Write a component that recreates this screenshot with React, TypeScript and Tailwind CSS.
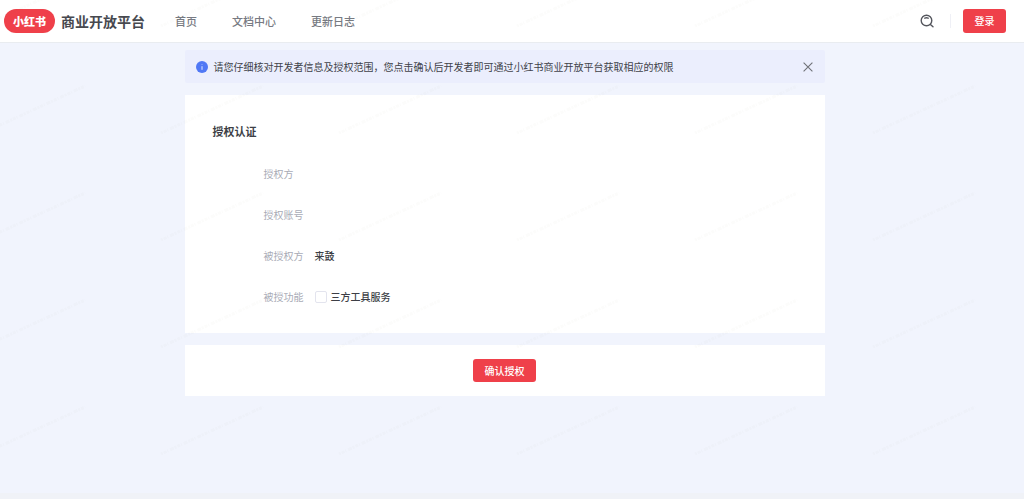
import { useState } from "react";
import type { ReactNode } from "react";

const navItems = [
  { label: "首页", href: "#home" },
  { label: "文档中心", href: "#docs" },
  { label: "更新日志", href: "#changelog" },
];

function SearchIcon() {
  return (
    <svg viewBox="0 0 14 14" className="h-3.5 w-3.5" fill="none" stroke="#55575e" strokeWidth="1.4" strokeLinecap="round" aria-hidden="true">
      <circle cx="6.5" cy="6.5" r="5.3" />
      <path d="M10.4 10.4 13 12.8M4.8 4.2Q6.5 3.3 8.2 4.2" />
    </svg>
  );
}

function InfoIcon() {
  return (
    <svg viewBox="0 0 12 12" className="h-3 w-3 shrink-0" aria-hidden="true">
      <circle cx="6" cy="6" r="6" fill="#5078f5" />
      <path d="M6 5.2v3.6" stroke="#dfe6ff" strokeWidth="1" />
      <circle cx="6" cy="3.5" r="0.5" fill="#a9bcfb" />
    </svg>
  );
}

function CloseIcon() {
  return (
    <svg viewBox="0 0 10 10" className="h-2.5 w-2.5" stroke="#6f7178" strokeWidth="1.1" aria-hidden="true">
      <path d="M.6.6 9.4 9.4M9.4.6.6 9.4" />
    </svg>
  );
}

// Faint diagonal watermark repeated over the whole page
function Watermark() {
  return (
    <svg className="pointer-events-none absolute inset-0 h-full w-full" aria-hidden="true">
      <defs>
        <pattern id="watermark" x="159" y="28" width="178" height="107" patternUnits="userSpaceOnUse">
          <path d="M2 105 104 58" stroke="#7a6a40" strokeOpacity="0.02" strokeWidth="3" strokeDasharray="2 1 3 1 1 2 4 1" />
        </pattern>
      </defs>
      <rect width="100%" height="100%" fill="url(#watermark)" />
    </svg>
  );
}

function Row({ label, children }: { label: string; children?: ReactNode }) {
  return (
    <div className="flex h-[41px] items-center">
      <dt className="w-[51px] text-[#a9abb6]">{label}</dt>
      <dd className="flex items-center font-medium text-[#3d3f46]">{children}</dd>
    </div>
  );
}

export default function App() {
  const [showNotice, setShowNotice] = useState(true);
  const [checked, setChecked] = useState(false);

  return (
    <div className="relative flex min-h-screen flex-col bg-[#f1f4fd] font-['Noto_Sans_CJK_SC',sans-serif] text-[10px] leading-4">
      <header className="flex h-[43px] items-center border-b border-[#e9ecf0] bg-white pr-[18px] pl-1">
        <a href="#home" className="flex items-center gap-1.5">
          <span className="flex h-6 w-[51px] items-center justify-center rounded-full bg-[#ef404a] text-[11px] font-black text-white">小红书</span>
          <span className="text-[14px] font-bold text-[#47494f]">商业开放平台</span>
        </a>
        <nav className="ml-[30px] flex gap-[35px] text-[11px] font-medium text-[#777a82]">
          {navItems.map((item) => (
            <a key={item.href} href={item.href}>{item.label}</a>
          ))}
        </nav>
        <div className="ml-auto flex items-center">
          <button type="button" aria-label="搜索"><SearchIcon /></button>
          <span className="mr-3 ml-4 h-3.5 w-px bg-[#eff0f6]" />
          <button type="button" className="h-6 w-[43px] rounded-[3px] bg-[#ef404a] font-medium text-white">登录</button>
        </div>
      </header>

      <div className="flex grow flex-col pr-[15px]">
        <main className="mx-auto mt-[7px] flex w-full max-w-[640px] flex-col gap-3">
          {showNotice && (
            <div role="status" className="flex h-[33px] items-center gap-1.5 rounded-xs bg-[#ebeefd] pr-3 pl-[11px] text-[#404249]">
              <InfoIcon />
              <p>请您仔细核对开发者信息及授权范围，您点击确认后开发者即可通过小红书商业开放平台获取相应的权限</p>
              <button type="button" aria-label="关闭" className="ml-auto" onClick={() => setShowNotice(false)}><CloseIcon /></button>
            </div>
          )}

          <section className="bg-white px-7 pt-7 pb-4">
            <h1 className="text-[11px] leading-4 font-bold text-[#3d3f46]">授权认证</h1>
            <dl className="mt-3.5 pl-[51px]">
              <Row label="授权方" />
              <Row label="授权账号" />
              <Row label="被授权方">来鼓</Row>
              <Row label="被授功能">
                <label className="flex items-center gap-1">
                  <input
                    type="checkbox"
                    checked={checked}
                    onChange={(e) => setChecked(e.target.checked)}
                    className="h-3 w-3 appearance-none rounded-xs border border-[#e3e4ee] bg-white checked:border-[#ef404a] checked:bg-[#ef404a]"
                  />
                  三方工具服务
                </label>
              </Row>
            </dl>
          </section>

          <section className="flex justify-center bg-white py-[14px]">
            <button type="button" className="h-[23px] w-[63px] rounded-[3px] bg-[#ef404a] font-medium text-white">确认授权</button>
          </section>
        </main>
      </div>

      <div className="h-1.5 bg-[#f0f2f7]" />
      <Watermark />
    </div>
  );
}
